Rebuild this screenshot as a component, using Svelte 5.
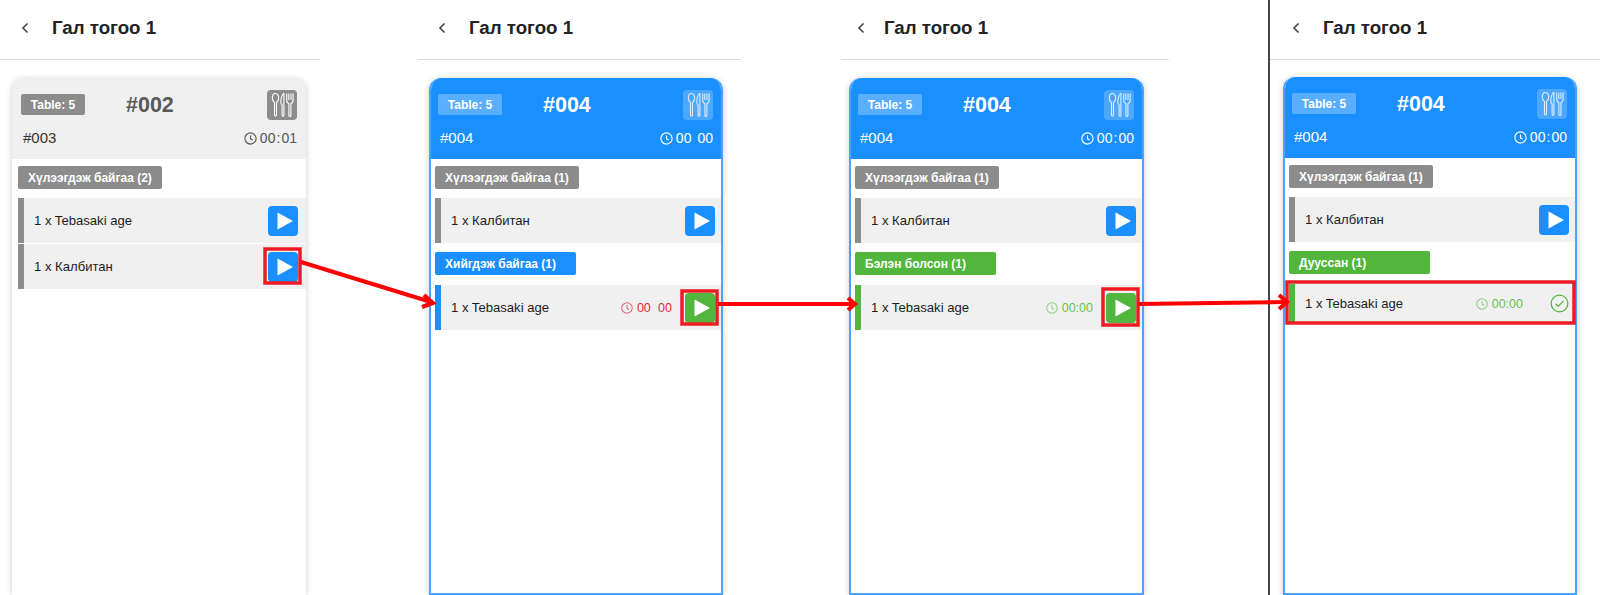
<script lang="ts">
	const clock = 'M12 3a9 9 0 1 0 0 18 9 9 0 0 0 0-18z M12 7v5.500l3.500 2';

	const panels = [
		{
			cls: 'p1',
			active: false,
			no: '#002',
			sub: '#003',
			time: ['00', ':', '01'],
			groups: [
				{
					tone: 'gray',
					label: 'Хүлээгдэж байгаа (2)',
					rows: [
						{ name: '1 x Tebasaki age', btn: 'blue' },
						{ name: '1 x Калбитан', btn: 'blue' }
					]
				}
			]
		},
		{
			cls: 'p2',
			active: true,
			no: '#004',
			sub: '#004',
			time: ['00', '', '00'],
			groups: [
				{ tone: 'gray', label: 'Хүлээгдэж байгаа (1)', rows: [{ name: '1 x Калбитан', btn: 'blue' }] },
				{
					tone: 'blue',
					label: 'Хийгдэж байгаа (1)',
					rows: [{ name: '1 x Tebasaki age', btn: 'green', time: '00\u2002\u200a00', timeTone: 'red' }]
				}
			]
		},
		{
			cls: 'p3',
			active: true,
			no: '#004',
			sub: '#004',
			time: ['00', ':', '00'],
			groups: [
				{ tone: 'gray', label: 'Хүлээгдэж байгаа (1)', rows: [{ name: '1 x Калбитан', btn: 'blue' }] },
				{
					tone: 'green',
					label: 'Бэлэн болсон (1)',
					rows: [{ name: '1 x Tebasaki age', btn: 'green', time: '00:00', timeTone: 'green' }]
				}
			]
		},
		{
			cls: 'p4',
			active: true,
			no: '#004',
			sub: '#004',
			time: ['00', ':', '00'],
			groups: [
				{ tone: 'gray', label: 'Хүлээгдэж байгаа (1)', rows: [{ name: '1 x Калбитан', btn: 'blue' }] },
				{
					tone: 'green',
					label: 'Дууссан (1)',
					rows: [{ name: '1 x Tebasaki age', btn: 'done', time: '00:00', timeTone: 'green' }]
				}
			]
		}
	];

	// Annotation boxes drawn over the screenshots
	const boxes = [
		[265, 249, 35, 34],
		[682, 291, 35, 33],
		[1103, 289, 35, 36],
		[1287, 282, 287, 41]
	];
</script>

<div class="page">
	{#each panels as panel}
		<section class="panel {panel.cls}">
			<header class="topbar">
				<svg class="back" viewBox="0 0 10 14" width="10" height="14" aria-hidden="true">
					<path d="M7.500 2.500 3 7l4.500 4.500" fill="none" stroke="#444" stroke-width="1.600" />
				</svg>
				<h1>Гал тогоо 1</h1>
			</header>

			<article class="card" class:active={panel.active}>
				<div class="card__head">
					<div class="card__top">
						<span class="table">Table: 5</span>
						<span class="no">{panel.no}</span>
						<span class="utensils">
							<svg viewBox="0 0 30 30" width="30" height="30" fill="none" stroke="currentColor" stroke-width="1.100" aria-hidden="true">
								<path d="M8.500 3.500c-2 0-3.200 2.200-3.200 4.600 0 2.200 1 3.800 2.200 4.400v12.200c0 .8.400 1.300 1 1.300s1-.5 1-1.300V12.500c1.200-.6 2.200-2.200 2.200-4.400 0-2.400-1.200-4.600-3.200-4.600z" />
								<path d="M16.500 3.500c-1.800 2-2.700 5-2.700 8.500 0 1.500.5 2.500 1.300 3v10c0 .8.300 1.300.9 1.300s.9-.5.9-1.300V3.500z" />
								<path d="M19.700 3.500v6.500c0 2 1 3.200 2.200 3.600v11.600c0 .8.400 1.300 1 1.300s1-.5 1-1.300V13.600c1.200-.4 2.200-1.600 2.200-3.600V3.500" />
								<path d="M21.800 3.500v6.500M24 3.500v6.500" />
							</svg>
						</span>
					</div>
					<div class="card__sub">
						<span>{panel.sub}</span>
						<span class="head-time">
							<svg viewBox="0 0 24 24" width="15" height="15" fill="none" stroke="currentColor" stroke-width="1.800" aria-hidden="true"><path d={clock} /></svg>
							<span class="digits">{panel.time[0]}<i>{panel.time[1]}</i>{panel.time[2]}</span>
						</span>
					</div>
				</div>

				{#each panel.groups as group}
					<div class="label {group.tone}">{group.label}</div>
					<div class="rows">
						{#each group.rows as row}
							<div class="row {group.tone}" class:done={row.btn === 'done'}>
								<span class="row__name">{row.name}</span>
								{#if row.time}
									<span class="row__time {row.timeTone}">
										<svg viewBox="0 0 24 24" width="14" height="14" fill="none" stroke="currentColor" stroke-width="1.800" aria-hidden="true"><path d={clock} /></svg>
										{row.time}
									</span>
								{/if}
								{#if row.btn === 'done'}
									<svg class="check" viewBox="0 0 20 20" width="19" height="19" fill="none" stroke="#52b63c" stroke-width="1.300" aria-hidden="true">
										<circle cx="10" cy="10" r="8.800" />
										<path d="M5.800 10.300l2.900 2.800 5.500-5.800" />
									</svg>
								{:else}
									<button class="play {row.btn}" type="button" aria-label="Start">
										<svg viewBox="0 0 30 30" width="30" height="30" aria-hidden="true"><path d="M9.500 6.500v17L25 15z" fill="#fff" /></svg>
									</button>
								{/if}
							</div>
						{/each}
					</div>
				{/each}
			</article>
		</section>
	{/each}

	<svg class="marks" viewBox="0 0 1600 595" width="1600" height="595" aria-hidden="true">
		{#each boxes as b}
			<rect x={b[0]} y={b[1]} width={b[2]} height={b[3]} fill="none" stroke="#ed1c24" stroke-width="3.500" />
		{/each}
		<g fill="none" stroke="#f00" stroke-width="4">
			<path d="M301 262 431 302" />
			<path d="M424 295l9 8-11 4" />
			<path d="M718 304H854" />
			<path d="M848 298l7 6-7 6" />
			<path d="M1138 304 1286 302" />
			<path d="M1279 295l8 7-8 7" />
		</g>
	</svg>
</div>

<style>
	:global(body) {
		margin: 0;
		background: #fff;
	}

	.page {
		position: relative;
		display: flex;
		width: 1600px;
		height: 595px;
		overflow: hidden;
		background: #fff;
		font-family: 'Liberation Sans', Arial, sans-serif;
		color: #1c1c1c;
	}

	.panel {
		display: flex;
		flex-direction: column;
		flex: none;
		height: 595px;
	}

	.p1 {
		width: 320px;
	}

	.p2 {
		width: 323px;
		margin-left: 98px;
	}

	.p3 {
		width: 328px;
		margin-left: 100px;
	}

	.p4 {
		width: 330px;
		margin-left: 101px;
		position: relative;
	}

	/* dark rule between the last two shots */
	.p4::before {
		content: '';
		position: absolute;
		left: -2px;
		top: 0;
		bottom: 0;
		width: 2px;
		background: #444;
	}

	.topbar {
		display: flex;
		align-items: center;
		gap: 22px;
		box-sizing: border-box;
		height: 60px;
		flex: none;
		padding: 0 0 3px 20px;
		border-bottom: 1px solid #dcdcdc;
	}

	.p2 .topbar {
		padding-left: 19px;
	}

	.p3 .topbar {
		gap: 18px;
		padding-left: 15px;
	}

	.p4 .topbar {
		padding-left: 21px;
	}

	h1 {
		margin: 0;
		font-size: 18.700px;
		font-weight: 700;
		color: #222;
	}

	.card {
		box-sizing: border-box;
		width: 294px;
		margin: 18px 0 0 12px;
		flex: 1;
		border-radius: 12px 12px 0 0;
		background: #fff;
		box-shadow: 0 1px 6px rgba(0, 0, 0, 0.2);
		overflow: hidden;
	}

	.p2 .card {
		margin-left: 11px;
	}

	.p3 .card {
		margin-left: 8px;
		width: 295px;
	}

	.p4 .card {
		margin-left: 13px;
		margin-top: 17px;
	}

	.card.active {
		border: 2px solid #4aa3ff;
		border-top: none;
	}

	.card__head {
		box-sizing: border-box;
		height: 81px;
		padding: 12px 9px 0 9px;
		background: #f0f0f0;
		color: #333;
	}

	.active .card__head {
		margin: 0 -2px;
		padding: 12px 10px 0 9px;
		background: #1a8fff;
		color: #fff;
	}

	.card__top {
		position: relative;
		display: flex;
		align-items: center;
		justify-content: space-between;
		height: 30px;
	}

	.table {
		display: flex;
		align-items: center;
		justify-content: center;
		box-sizing: border-box;
		width: 64px;
		height: 21px;
		margin-top: -1px;
		border-radius: 2px;
		background: #8c8c8c;
		color: #fff;
		font-size: 12px;
		font-weight: 700;
	}

	.active .table {
		background: rgba(255, 255, 255, 0.28);
	}

	.no {
		position: absolute;
		left: 105px;
		top: 3px;
		font-size: 21.500px;
		font-weight: 700;
		color: #595959;
	}

	.active .no {
		color: #fff;
	}

	.utensils {
		display: flex;
		width: 30px;
		height: 30px;
		border-radius: 4px;
		background: #8c8c8c;
		color: #fff;
	}

	.active .utensils {
		background: rgba(255, 255, 255, 0.22);
		color: rgba(255, 255, 255, 0.8);
	}

	.card__sub {
		display: flex;
		align-items: center;
		justify-content: space-between;
		margin-top: 9px;
		padding: 0 0 0 2px;
		font-size: 15px;
		line-height: 18px;
	}

	.head-time {
		display: flex;
		align-items: center;
		gap: 2px;
		color: #555;
	}

	.active .head-time {
		color: #fff;
	}

	.digits {
		font-size: 14px;
	}

	.digits i {
		display: inline-block;
		width: 6px;
		text-align: center;
		font-style: normal;
	}

	.label {
		display: flex;
		align-items: center;
		box-sizing: border-box;
		width: 144px;
		height: 23px;
		margin: 7px 0 9px 6px;
		padding-left: 10px;
		border-radius: 2px;
		color: #fff;
		font-size: 12px;
		font-weight: 700;
	}

	.active .label {
		margin-left: 4px;
	}

	.label.gray {
		background: #8c8c8c;
	}

	.label.blue,
	.label.green {
		width: 141px;
		margin-top: 9px;
		margin-bottom: 10px;
	}

	.label.blue {
		background: #1a8fff;
	}

	.label.green {
		background: #52b63c;
	}

	.rows {
		display: flex;
		flex-direction: column;
		gap: 1px;
	}

	.row {
		display: flex;
		align-items: center;
		box-sizing: border-box;
		height: 45px;
		margin-left: 6px;
		padding: 0 8px 0 10px;
		border-left: 6px solid #8c8c8c;
		background: #f0f0f0;
		font-size: 13.100px;
	}

	.active .row {
		margin-left: 4px;
		padding-right: 6px;
	}

	.row.done {
		height: 39px;
	}

	.row.blue {
		border-left-color: #1a8fff;
	}

	.row.green {
		border-left-color: #52b63c;
	}

	.row__name {
		flex: 1;
	}

	.row__time {
		display: flex;
		align-items: center;
		gap: 3px;
		margin-right: 13px;
		font-size: 12.500px;
	}

	.row.done .row__time {
		margin-right: 0;
	}

	.row__time.red {
		color: #e8233c;
	}

	.row__time.green {
		color: #66c255;
	}

	.row__time svg {
		opacity: 0.7;
	}

	.check {
		margin: 0 0 0 27px;
	}

	.play {
		display: block;
		width: 30px;
		height: 30px;
		padding: 0;
		border: none;
		border-radius: 4px;
	}

	.play.blue {
		background: #1a8fff;
	}

	.play.green {
		background: #52b63c;
	}

	.marks {
		position: absolute;
		left: 0;
		top: 0;
		pointer-events: none;
	}
</style>
